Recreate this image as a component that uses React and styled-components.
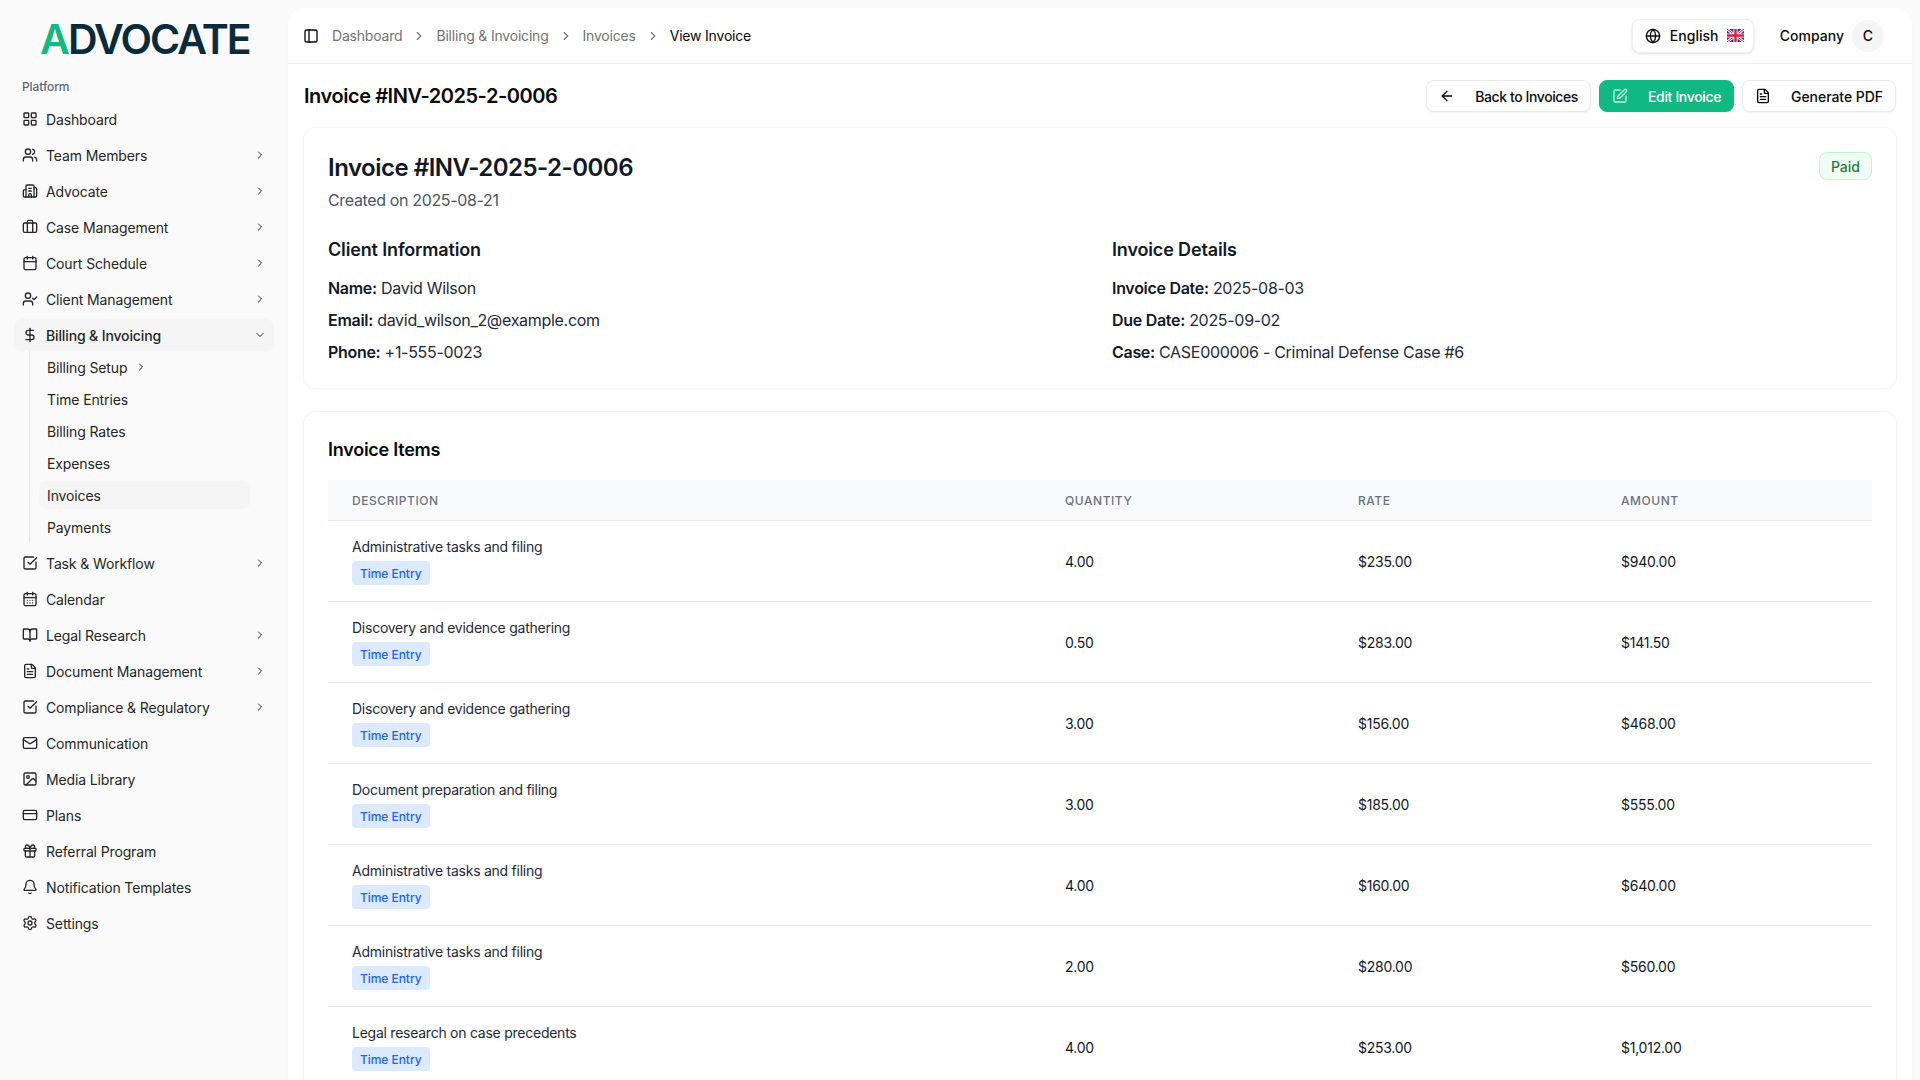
// App.jsx
import React from "react";
import styled, { createGlobalStyle } from "styled-components";
import {
  ArrowLeft,
  Bell,
  BookOpen,
  Briefcase,
  Building2,
  Calendar,
  CalendarDays,
  ChevronDown,
  ChevronRight,
  CreditCard,
  DollarSign,
  FileText,
  Gift,
  Globe,
  Image,
  LayoutGrid,
  Mail,
  PanelLeft,
  Settings,
  SquareCheckBig,
  SquarePen,
  UserCheck,
  Users,
} from "lucide-react";

const GlobalStyle = createGlobalStyle`
  html, body {
    margin: 0;
    height: 100%;
    overflow: hidden;
    background: #fafafa;
    font-family: Inter, "Noto Sans", sans-serif;
    color: #0a0a0a;
  }
  * {
    box-sizing: border-box;
  }
`;

const Layout = styled.div`
  display: flex;
  width: 1920px;
  height: 1080px;
  overflow: hidden;
`;

const Sidebar = styled.aside`
  flex: 0 0 288px;
  padding: 24px 14px 0;
  display: flex;
  flex-direction: column;
`;

const Logo = styled.div`
  height: 30px;
  margin-left: 26px;
  display: flex;
  align-items: center;
  font-family: Inter, sans-serif;
  font-size: 41px;
  font-weight: 600;
  letter-spacing: -1.9px;
  color: #0b2b3c;
  white-space: nowrap;
  span {
    color: #14b881;
  }
`;

const GroupLabel = styled.div`
  margin: 25px 0 0 8px;
  height: 16px;
  line-height: 16px;
  font-size: 12px;
  font-weight: 500;
  letter-spacing: -0.1px;
  color: #5f6670;
`;

const NavList = styled.nav`
  margin-top: 8px;
  display: flex;
  flex-direction: column;
  gap: 4px;
`;

const NavRow = styled.div`
  height: 32px;
  display: flex;
  align-items: center;
  gap: 8px;
  padding: 0 8px;
  border-radius: 8px;
  font-size: 14px;
  letter-spacing: -0.13px;
  color: #262626;
  background: ${(p) => (p.$active ? "#f5f5f5" : "transparent")};
  font-weight: ${(p) => (p.$active ? 500 : 400)};
  svg {
    flex: none;
    color: #262626;
  }
`;

const NavLabel = styled.span`
  flex: 1;
  white-space: nowrap;
`;

const SubList = styled.div`
  margin: -4px 0 0 15px;
  padding: 0 24px 2px 9px;
  border-left: 1px solid #e5e5e5;
  display: flex;
  flex-direction: column;
  gap: 4px;
`;

const SubRow = styled.div`
  height: 28px;
  display: flex;
  align-items: center;
  gap: 8px;
  padding: 0 8px;
  border-radius: 8px;
  font-size: 14px;
  letter-spacing: -0.13px;
  color: #262626;
  background: ${(p) => (p.$active ? "#f5f5f5" : "transparent")};
`;

const SubStack = styled.div`
  padding-top: 2px;
  display: flex;
  flex-direction: column;
  gap: 4px;
`;

const Inset = styled.main`
  flex: 1;
  margin: 8px 8px 0 0;
  background: #fff;
  border-radius: 16px 16px 0 0;
  box-shadow: 0 1px 2px rgba(0, 0, 0, 0.04);
  overflow: hidden;
  min-width: 0;
`;

const Header = styled.header`
  height: 56px;
  display: flex;
  align-items: center;
  padding: 0 28px 0 15px;
  border-bottom: 1px solid #f0f0f0;
`;

const Crumbs = styled.div`
  margin-left: 13px;
  display: flex;
  align-items: center;
  gap: 10px;
  flex: 1;
  font-size: 14px;
  letter-spacing: -0.2px;
  color: #737373;
  svg {
    color: #737373;
  }
`;

const CurrentCrumb = styled.span`
  color: #0a0a0a;
`;

const LangButton = styled.div`
  height: 34px;
  width: 122px;
  display: flex;
  align-items: center;
  padding: 0 8px 0 12px;
  gap: 9px;
  border-radius: 8px;
  background: #fff;
  border: 1px solid #f0f0f0;
  box-shadow: 0 1px 3px rgba(0, 0, 0, 0.14);
  font-size: 14px;
  font-weight: 500;
  svg {
    flex: none;
  }
`;

const Company = styled.div`
  margin-left: 26px;
  display: flex;
  align-items: center;
  gap: 8px;
  font-size: 14px;
  font-weight: 500;
`;

const Avatar = styled.div`
  width: 32px;
  height: 32px;
  border-radius: 50%;
  background: #f5f5f5;
  display: flex;
  align-items: center;
  justify-content: center;
  font-size: 14px;
  font-weight: 500;
`;

const Content = styled.div`
  padding: 16px 16px 0;
  display: flex;
  flex-direction: column;
`;

const TitleBar = styled.div`
  height: 32px;
  display: flex;
  align-items: center;
  justify-content: space-between;
  margin-bottom: 16px;
`;

const PageTitle = styled.h1`
  margin: 0;
  font-size: 20px;
  line-height: 28px;
  font-weight: 600;
  letter-spacing: -0.45px;
`;

const Actions = styled.div`
  display: flex;
  gap: 8px;
`;

const ActionButton = styled.div`
  height: 32px;
  display: flex;
  align-items: center;
  gap: 20px;
  padding: 0 12px;
  border-radius: 8px;
  font-size: 14px;
  font-weight: 500;
  letter-spacing: ${(p) => p.$track};
  background: ${(p) => (p.$primary ? "#10b981" : "#fff")};
  color: ${(p) => (p.$primary ? "#fff" : "#0a0a0a")};
  border: 1px solid ${(p) => (p.$primary ? "#10b981" : "#ebebeb")};
  box-shadow: 0 1px 2px rgba(0, 0, 0, 0.05);
  svg {
    opacity: ${(p) => (p.$primary ? 0.75 : 1)};
  }
`;

const Card = styled.section`
  background: #fff;
  border-radius: 12px;
  box-shadow: 0 0 0 1px #f5f5f5, 0 1px 3px rgba(0, 0, 0, 0.08);
  padding: 24px;
  margin-bottom: 24px;
`;

const InvoiceHead = styled.div`
  display: flex;
  justify-content: space-between;
  align-items: flex-start;
`;

const InvoiceTitle = styled.h2`
  margin: 0;
  font-size: 24px;
  line-height: 32px;
  font-weight: 600;
  letter-spacing: -0.5px;
  color: #111827;
`;

const CreatedOn = styled.div`
  margin-top: 4px;
  font-size: 16px;
  line-height: 24px;
  letter-spacing: -0.35px;
  color: #4b5563;
`;

const PaidBadge = styled.div`
  height: 28px;
  padding: 0 11px;
  display: flex;
  align-items: center;
  border-radius: 8px;
  font-size: 14px;
  font-weight: 500;
  color: #15803d;
  background: #f0fdf4;
  border: 1px solid #bbf7d0;
`;

const InfoGrid = styled.div`
  margin-top: 24px;
  display: grid;
  grid-template-columns: 784px 1fr;
`;

const SectionTitle = styled.h3`
  margin: 0 0 12px;
  font-size: 18px;
  line-height: 28px;
  font-weight: 600;
  letter-spacing: -0.15px;
  color: #111827;
`;

const InfoLine = styled.p`
  margin: 0 0 8px;
  font-size: 16px;
  line-height: 24px;
  letter-spacing: -0.3px;
  color: #1f2937;
  strong {
    font-weight: 600;
    color: #111827;
  }
  &:last-child {
    margin-bottom: 0;
  }
`;

const ItemsTitle = styled.h3`
  margin: 0 0 16px;
  font-size: 18px;
  line-height: 28px;
  font-weight: 600;
  letter-spacing: -0.25px;
`;

const TableRow = styled.div`
  display: grid;
  grid-template-columns: 713px 293px 263px 1fr;
  align-items: center;
  border-bottom: 1px solid #e5e7eb;
`;

const HeadRow = styled(TableRow)`
  height: 41px;
  background: #f9fafb;
`;

const HeadCell = styled.div`
  padding-left: 24px;
  font-size: 12px;
  font-weight: 500;
  letter-spacing: 0.55px;
  color: #6b7280;
`;

const BodyRow = styled(TableRow)`
  height: 81px;
`;

const Cell = styled.div`
  padding-left: 24px;
  font-size: 14px;
  letter-spacing: -0.25px;
  color: #111827;
`;

const ItemName = styled.div`
  line-height: 20px;
  color: #1f2937;
`;

const TypeTag = styled.span`
  margin-top: 4px;
  display: inline-flex;
  align-items: center;
  height: 24px;
  padding: 0 8px;
  border-radius: 4px;
  font-size: 12px;
  font-weight: 500;
  letter-spacing: -0.05px;
  color: #2563eb;
  background: #dbeafe;
`;

const navBefore = [
  { label: "Dashboard", icon: LayoutGrid },
  { label: "Team Members", icon: Users, more: true },
  { label: "Advocate", icon: Building2, more: true },
  { label: "Case Management", icon: Briefcase, more: true },
  { label: "Court Schedule", icon: Calendar, more: true },
  { label: "Client Management", icon: UserCheck, more: true },
];

const subItems = ["Time Entries", "Billing Rates", "Expenses", "Invoices", "Payments"];

const navAfter = [
  { label: "Task & Workflow", icon: SquareCheckBig, more: true },
  { label: "Calendar", icon: CalendarDays },
  { label: "Legal Research", icon: BookOpen, more: true },
  { label: "Document Management", icon: FileText, more: true },
  { label: "Compliance & Regulatory", icon: SquareCheckBig, more: true },
  { label: "Communication", icon: Mail },
  { label: "Media Library", icon: Image },
  { label: "Plans", icon: CreditCard },
  { label: "Referral Program", icon: Gift },
  { label: "Notification Templates", icon: Bell },
  { label: "Settings", icon: Settings },
];

const items = [
  ["Administrative tasks and filing", "4.00", "$235.00", "$940.00"],
  ["Discovery and evidence gathering", "0.50", "$283.00", "$141.50"],
  ["Discovery and evidence gathering", "3.00", "$156.00", "$468.00"],
  ["Document preparation and filing", "3.00", "$185.00", "$555.00"],
  ["Administrative tasks and filing", "4.00", "$160.00", "$640.00"],
  ["Administrative tasks and filing", "2.00", "$280.00", "$560.00"],
  ["Legal research on case precedents", "4.00", "$253.00", "$1,012.00"],
];

function NavItem({ item }) {
  const Icon = item.icon;
  return (
    <NavRow>
      <Icon size={16} strokeWidth={2} />
      <NavLabel>{item.label}</NavLabel>
      {item.more && <ChevronRight size={12} />}
    </NavRow>
  );
}

function UkFlag() {
  return (
    <svg width="17" height="13" viewBox="0 0 17 13">
      <rect width="17" height="13" fill="#2b3f8f" />
      <path d="M0 0 17 13M17 0 0 13" stroke="#fff" strokeWidth="2.6" />
      <path d="M0 0 17 13M17 0 0 13" stroke="#d5233f" strokeWidth="1" />
      <path d="M8.5 0V13M0 6.5H17" stroke="#fff" strokeWidth="4" />
      <path d="M8.5 0V13M0 6.5H17" stroke="#d5233f" strokeWidth="2.4" />
    </svg>
  );
}

export default function App() {
  return (
    <Layout>
      <GlobalStyle />
      <Sidebar>
        <Logo>
          <span>A</span>DVOCATE
        </Logo>
        <GroupLabel>Platform</GroupLabel>
        <NavList>
          {navBefore.map((item) => (
            <NavItem key={item.label} item={item} />
          ))}
          <NavRow $active>
            <DollarSign size={16} />
            <NavLabel>Billing & Invoicing</NavLabel>
            <ChevronDown size={12} />
          </NavRow>
          <SubList>
            <SubStack>
              <SubRow>
                Billing Setup
                <ChevronRight size={12} />
              </SubRow>
              {subItems.map((label) => (
                <SubRow key={label} $active={label === "Invoices"}>
                  {label}
                </SubRow>
              ))}
            </SubStack>
          </SubList>
          {navAfter.map((item) => (
            <NavItem key={item.label} item={item} />
          ))}
        </NavList>
      </Sidebar>
      <Inset>
        <Header>
          <PanelLeft size={16} />
          <Crumbs>
            <span>Dashboard</span>
            <ChevronRight size={14} />
            <span>Billing & Invoicing</span>
            <ChevronRight size={14} />
            <span>Invoices</span>
            <ChevronRight size={14} />
            <CurrentCrumb>View Invoice</CurrentCrumb>
          </Crumbs>
          <LangButton>
            <Globe size={16} />
            English
            <UkFlag />
          </LangButton>
          <Company>
            Company
            <Avatar>C</Avatar>
          </Company>
        </Header>
        <Content>
          <TitleBar>
            <PageTitle>Invoice #INV-2025-2-0006</PageTitle>
            <Actions>
              <ActionButton $track="-0.4px">
                <ArrowLeft size={16} />
                Back to Invoices
              </ActionButton>
              <ActionButton $primary $track="-0.35px">
                <SquarePen size={16} />
                Edit Invoice
              </ActionButton>
              <ActionButton $track="-0.05px">
                <FileText size={16} />
                Generate PDF
              </ActionButton>
            </Actions>
          </TitleBar>
          <Card>
            <InvoiceHead>
              <div>
                <InvoiceTitle>Invoice #INV-2025-2-0006</InvoiceTitle>
                <CreatedOn>Created on 2025-08-21</CreatedOn>
              </div>
              <PaidBadge>Paid</PaidBadge>
            </InvoiceHead>
            <InfoGrid>
              <div>
                <SectionTitle>Client Information</SectionTitle>
                <InfoLine>
                  <strong>Name:</strong> David Wilson
                </InfoLine>
                <InfoLine>
                  <strong>Email:</strong> david_wilson_2@example.com
                </InfoLine>
                <InfoLine>
                  <strong>Phone:</strong> +1-555-0023
                </InfoLine>
              </div>
              <div>
                <SectionTitle>Invoice Details</SectionTitle>
                <InfoLine>
                  <strong>Invoice Date:</strong> 2025-08-03
                </InfoLine>
                <InfoLine>
                  <strong>Due Date:</strong> 2025-09-02
                </InfoLine>
                <InfoLine>
                  <strong>Case:</strong> CASE000006 - Criminal Defense Case #6
                </InfoLine>
              </div>
            </InfoGrid>
          </Card>
          <Card>
            <ItemsTitle>Invoice Items</ItemsTitle>
            <HeadRow>
              <HeadCell>DESCRIPTION</HeadCell>
              <HeadCell>QUANTITY</HeadCell>
              <HeadCell>RATE</HeadCell>
              <HeadCell>AMOUNT</HeadCell>
            </HeadRow>
            {items.map((row, i) => (
              <BodyRow key={i}>
                <Cell>
                  <ItemName>{row[0]}</ItemName>
                  <TypeTag>Time Entry</TypeTag>
                </Cell>
                <Cell>{row[1]}</Cell>
                <Cell>{row[2]}</Cell>
                <Cell>{row[3]}</Cell>
              </BodyRow>
            ))}
          </Card>
        </Content>
      </Inset>
    </Layout>
  );
}
